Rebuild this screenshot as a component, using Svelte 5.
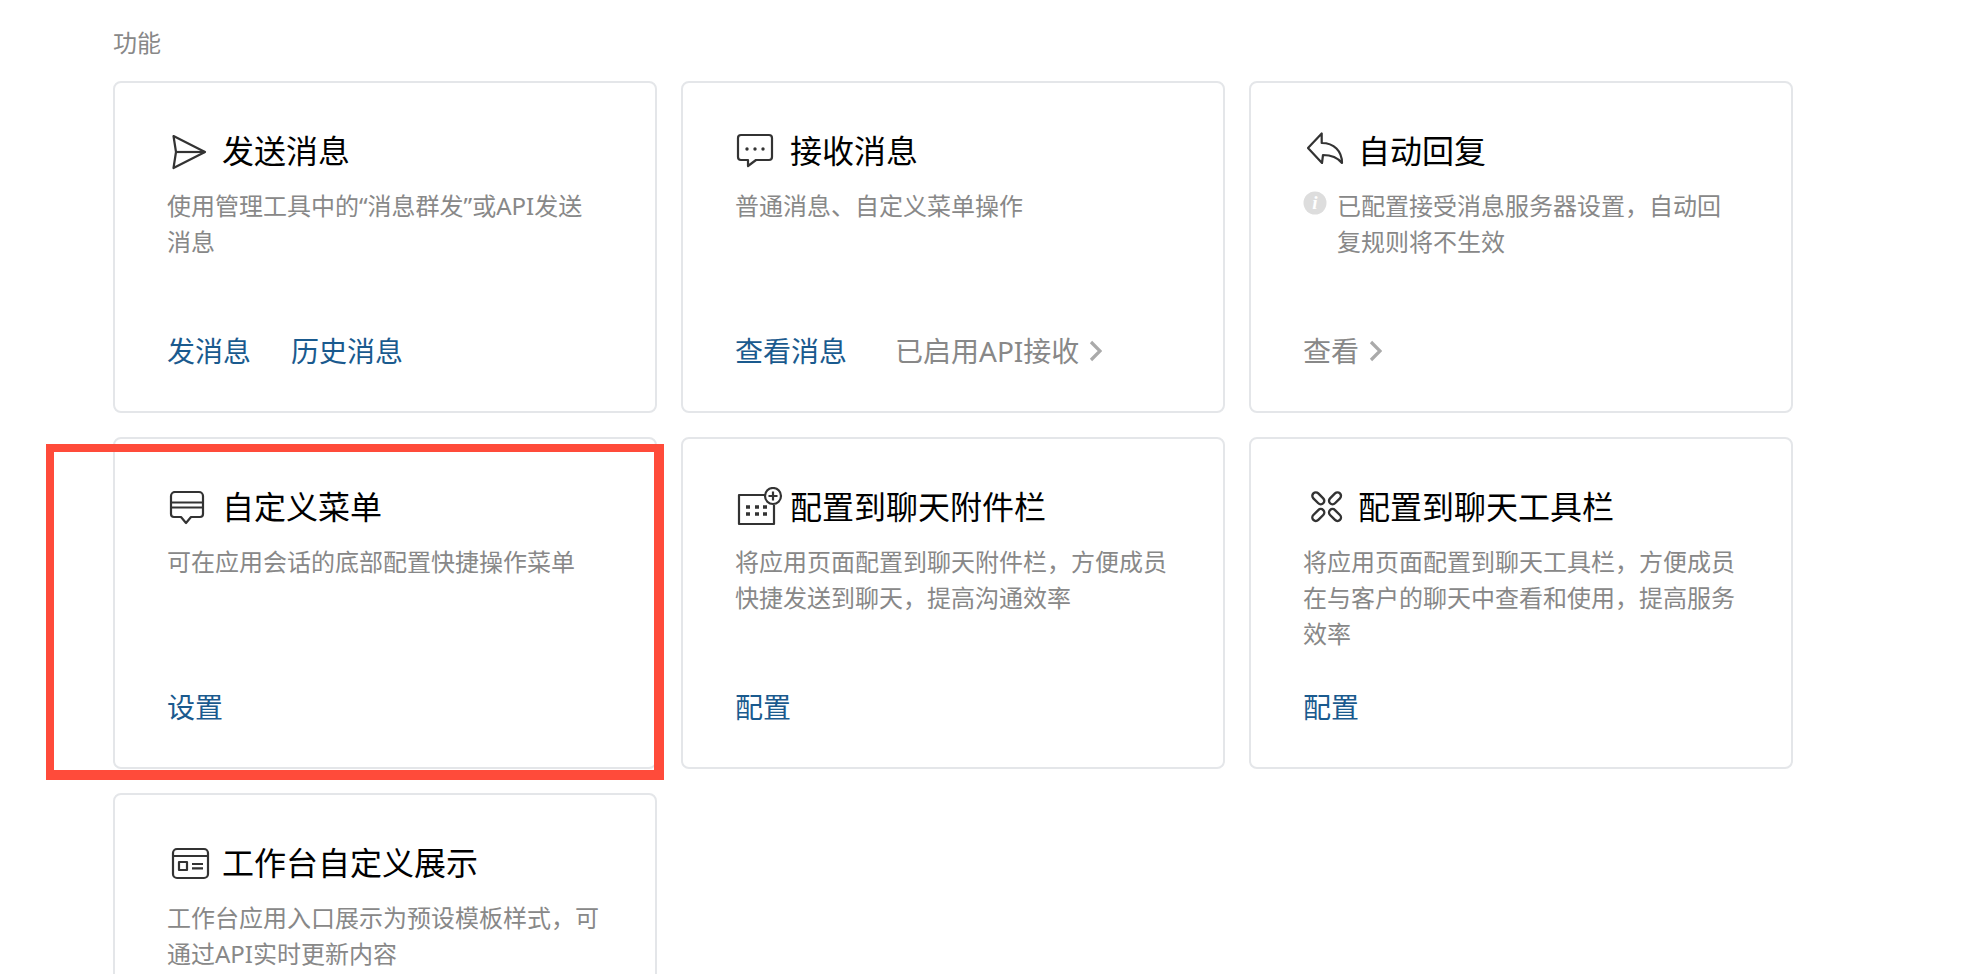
<script>
	const cards = [
		{
			icon: 'send',
			title: '发送消息',
			desc: '使用管理工具中的“消息群发”或API发送消息',
			links: [{ text: '发消息' }, { text: '历史消息' }]
		},
		{
			icon: 'chat',
			title: '接收消息',
			desc: '普通消息、自定义菜单操作',
			links: [{ text: '查看消息' }, { text: '已启用API接收', muted: true }]
		},
		{
			icon: 'reply',
			title: '自动回复',
			desc: '已配置接受消息服务器设置，自动回复规则将不生效',
			info: true,
			links: [{ text: '查看', muted: true }]
		},
		{
			icon: 'menu',
			title: '自定义菜单',
			desc: '可在应用会话的底部配置快捷操作菜单',
			links: [{ text: '设置' }]
		},
		{
			icon: 'attach',
			title: '配置到聊天附件栏',
			desc: '将应用页面配置到聊天附件栏，方便成员快捷发送到聊天，提高沟通效率',
			links: [{ text: '配置' }]
		},
		{
			icon: 'tools',
			title: '配置到聊天工具栏',
			desc: '将应用页面配置到聊天工具栏，方便成员在与客户的聊天中查看和使用，提高服务效率',
			links: [{ text: '配置' }]
		},
		{
			icon: 'panel',
			title: '工作台自定义展示',
			desc: '工作台应用入口展示为预设模板样式，可通过API实时更新内容',
			links: []
		}
	];
</script>

<div class="page">
	<div class="section-label">功能</div>
	<div class="grid">
		{#each cards as card}
			<div class="card">
				<div class="card-title">
					<svg class="title-icon" width="48" height="40" viewBox="0 0 48 40" fill="none" stroke="#333" stroke-width="2.2" stroke-linejoin="round">
						{#if card.icon === 'send'}
							<path d="M6.5 5L38 21 6.5 37 9 21z" />
							<path d="M9 21h29" />
						{:else if card.icon === 'chat'}
							<path d="M6 4h28a3 3 0 0 1 3 3v19a3 3 0 0 1-3 3H21l-8 6v-6H6a3 3 0 0 1-3-3V7a3 3 0 0 1 3-3z" />
							<circle cx="12" cy="18" r="1.7" fill="#333" stroke="none" />
							<circle cx="20" cy="18" r="1.7" fill="#333" stroke="none" />
							<circle cx="28" cy="18" r="1.7" fill="#333" stroke="none" />
						{:else if card.icon === 'reply'}
							<path d="M5 17L18.7 2.5V12C31 12 39 20 39 32 35 27 29 24 20 24L19 32z" />
						{:else if card.icon === 'menu'}
							<path d="M7 5h25a4 4 0 0 1 4 4v18a3 3 0 0 1-3 3H24l-5 6-5-6H7a3 3 0 0 1-3-3V9a4 4 0 0 1 4-4z" />
							<path d="M4 15.5h32M4 20.5h32" />
						{:else if card.icon === 'attach'}
							<path d="M30 8H4v29h35V18" />
							<circle cx="38" cy="9" r="8" />
							<path d="M38 4.5v9M33.5 9h9" />
							<path d="M11 20h4M20 20h4M28 20h4M11 27h4M20 27h4M28 27h4" stroke-width="3.5" />
						{:else if card.icon === 'tools'}
							<g stroke-width="2.4">
								<rect x="8.3" y="7.8" width="14" height="7" rx="3.5" transform="rotate(45 15.3 11.3)" />
								<rect x="25" y="7.8" width="14" height="7" rx="3.5" transform="rotate(-45 32 11.3)" />
								<rect x="8.3" y="24.5" width="14" height="7" rx="3.5" transform="rotate(-45 15.3 28)" />
								<rect x="25" y="24.5" width="14" height="7" rx="3.5" transform="rotate(45 32 28)" />
							</g>
						{:else if card.icon === 'panel'}
							<rect x="6" y="6" width="35" height="29" rx="4" />
							<path d="M6 13h35" />
							<rect x="12" y="19" width="8" height="8" />
							<path d="M25 21h11M25 25.3h11" />
						{/if}
					</svg>
					<span>{card.title}</span>
				</div>
				<div class="card-desc" class:has-info={card.info}>
					{#if card.info}
						<svg class="info-icon" width="24" height="24" viewBox="0 0 24 24">
							<circle cx="12" cy="12" r="11.5" fill="#ddd" />
							<text x="12" y="18" text-anchor="middle" class="info-glyph">i</text>
						</svg>
					{/if}
					{card.desc}
				</div>
				<div class="card-links">
					{#each card.links as link}
						<span class="link" class:muted={link.muted}>
							{link.text}
							{#if link.muted}
								<svg class="chevron" width="13" height="22" viewBox="0 0 13 22" fill="none" stroke="#aaa" stroke-width="3.2">
									<path d="M2 2l9 9-9 9" />
								</svg>
							{/if}
						</span>
					{/each}
				</div>
			</div>
		{/each}
	</div>
	<div class="highlight"></div>
</div>

<style>
	:global(html),
	:global(body) {
		margin: 0;
		height: 974px;
		overflow: hidden;
		background: #fff;
	}

	.page {
		position: relative;
		height: 974px;
		overflow: hidden;
		padding-left: 113px;
		font-family: "Noto Sans", "Noto Sans CJK SC", sans-serif;
	}

	.section-label {
		height: 81px;
		padding-top: 26px;
		box-sizing: border-box;
		font-size: 24px;
		line-height: 34px;
		color: #888;
	}

	.grid {
		display: grid;
		grid-template-columns: repeat(3, 544px);
		grid-auto-rows: 332px;
		gap: 24px;
	}

	.card {
		display: flex;
		flex-direction: column;
		box-sizing: border-box;
		padding: 48px 52px 42px;
		border: 2px solid #e4e6e9;
		border-radius: 8px;
		background: #fff;
	}

	.card-title {
		display: flex;
		align-items: center;
		gap: 7px;
		height: 40px;
		font-size: 32px;
		line-height: 40px;
		color: #000;
	}

	.title-icon {
		flex: none;
	}

	.card-desc {
		position: relative;
		margin-top: 17px;
		flex: 1;
		font-size: 24px;
		line-height: 36px;
		color: #888;
	}

	.card-desc.has-info {
		padding-left: 34px;
	}

	.info-icon {
		position: absolute;
		left: 0;
		top: 3px;
	}

	.info-glyph {
		font-family: "Liberation Serif", serif;
		font-style: italic;
		font-weight: 700;
		font-size: 19px;
		fill: #fff;
	}

	.card-links {
		display: flex;
		gap: 40px;
		font-size: 28px;
		line-height: 36px;
		color: #1a5a8e;
	}

	.link {
		display: flex;
		align-items: center;
		gap: 10px;
	}

	.link.muted {
		color: #888;
	}

	.link.muted:not(:first-child) {
		margin-left: 8px;
	}

	.highlight {
		position: absolute;
		left: 46px;
		top: 444px;
		width: 618px;
		height: 336px;
		box-sizing: border-box;
		border-style: solid;
		border-color: #ff4b3a;
		border-width: 8px 10px 10px 8px;
		pointer-events: none;
	}
</style>
